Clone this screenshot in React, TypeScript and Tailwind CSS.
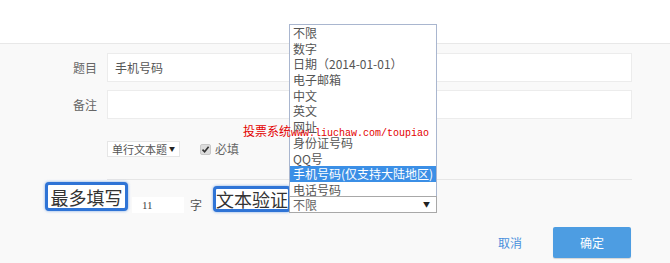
import React from "react";

const items = [
  "不限",
  "数字",
  "日期（2014-01-01）",
  "电子邮箱",
  "中文",
  "英文",
  "网址",
  "身份证号码",
  "QQ号",
  "手机号码(仅支持大陆地区)",
  "电话号码",
];

export default function App() {
  return (
    <div className="relative w-[670px] h-[263px] overflow-hidden bg-[#f9f9f9] text-[12px] text-[#555] font-['Noto_Sans_CJK_SC','Noto_Sans',sans-serif]">
      <div className="h-[44px] bg-white border-b border-[#e8e8e8]" />

      {/* 题目 */}
      <div className="flex items-center mt-[9px]">
        <div className="w-[97px] text-right text-[#666] leading-[16px]">题目</div>
        <div className="ml-[10px] w-[525px] h-[29px] bg-white border border-[#ececec] flex items-center pl-[7px] text-[#555]">
          手机号码
        </div>
      </div>

      {/* 备注 */}
      <div className="flex items-center mt-[8px]">
        <div className="w-[97px] text-right text-[#666] leading-[16px]">备注</div>
        <div className="ml-[10px] w-[525px] h-[29px] bg-white border border-[#ececec]" />
      </div>

      {/* type + required */}
      <div className="flex items-center mt-[22px] ml-[107px]">
        <div className="w-[73px] h-[16px] bg-white border border-[#e6e6e6] flex items-center pl-[4px] pr-[4px] text-[11px] text-[#555] leading-[14px]">
          <span>单行文本题</span>
          <span className="ml-auto text-[6px] text-[#222]">▼</span>
        </div>
        <div className="ml-[20px] w-[11px] h-[11px] bg-[#dcdcdc] border border-[#c8c8c8] rounded-[2px] flex items-center justify-center">
          <svg width="9" height="9" viewBox="0 0 9 9">
            <path d="M1.5 4.6 L3.6 6.8 L7.6 1.8" fill="none" stroke="#333" strokeWidth="1.6" />
          </svg>
        </div>
        <span className="ml-[4px] text-[#666] leading-[16px]">必填</span>
      </div>

      {/* divider */}
      <div className="ml-[107px] w-[525px] mt-[22px] border-t border-[#e6e6e6]" />

      {/* bottom row */}
      <div className="flex items-start mt-[2px]">
        <div className="ml-[45px] w-[83px] h-[29px] bg-white border-[3px] border-[#2f74d6] rounded-[4px] shadow-[0_0_3px_rgba(47,116,214,0.6)] flex items-center justify-center text-[18px] leading-[20px] font-normal text-[#333]">
          最多填写
        </div>
        <div className="ml-[4px] mt-[15px] w-[52px] h-[16px] bg-white flex items-center pl-[10px] text-[11px] text-[#444] font-['Liberation_Serif',serif]">
          11
        </div>
        <div className="ml-[6px] mt-[15px] leading-[16px] text-[#555]">字</div>
        <div className="ml-[11px] mt-[4px] w-[78px] h-[26px] bg-white border-[3px] border-[#2f74d6] rounded-[4px] shadow-[0_0_3px_rgba(47,116,214,0.6)] flex items-center justify-center text-[18px] leading-[20px] font-normal text-[#333]">
          文本验证
        </div>
        <div className="relative z-10 ml-[-2px] mt-[14px] w-[148px] h-[17px] bg-white border border-[#a8a8a8] flex items-center pl-[3px] pr-[6px] text-[12px] text-[#666] leading-[15px]">
          <span>不限</span>
          <span className="ml-auto text-[7px] text-[#222]">▼</span>
        </div>
      </div>

      {/* buttons */}
      <div className="flex items-center justify-end mt-[14px] pr-[39px]">
        <span className="text-[#4a90dc] leading-[16px]">取消</span>
        <div className="ml-[31px] w-[78px] h-[31px] rounded-[2px] bg-[#4d9de2] shadow-[0_1px_1px_rgba(0,0,0,0.15)] flex items-center justify-center text-white">
          确定
        </div>
      </div>

      {/* open dropdown list */}
      <div className="absolute left-[289px] top-[24px] w-[148px] h-[174px] bg-white border border-[#a9b6cf] text-[12px] text-[#555]">
        {items.map((t, i) => (
          <div
            key={t}
            className={
              "h-[15.7px] leading-[15.7px] pl-[3px] whitespace-nowrap " +
              (i === 9 ? "bg-[#3b8fe6] text-white" : "")
            }
          >
            {t}
          </div>
        ))}
      </div>

      {/* watermark */}
      <div className="absolute left-[243px] top-[124px] z-20 flex items-baseline text-[#e30000] whitespace-nowrap">
        <span className="text-[12px] leading-[14px]">投票系统</span>
        <span className="text-[10px] leading-[14px] font-['Liberation_Mono',monospace]">www.liuchaw.com/toupiao</span>
      </div>
    </div>
  );
}
